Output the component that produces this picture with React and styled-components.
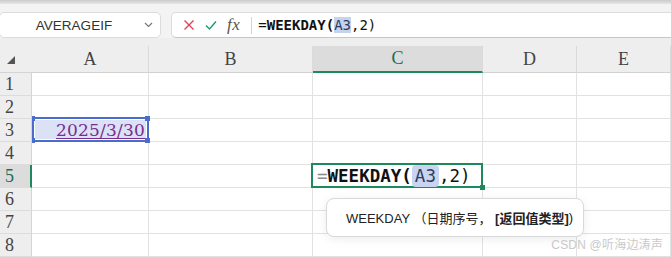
import React from "react";
import styled, { createGlobalStyle } from "styled-components";

const Global = createGlobalStyle`
  html, body {
    margin: 0;
    padding: 0;
    background: #fff;
  }
  body {
    overflow: hidden;
  }
`;

const Page = styled.div`
  position: relative;
  width: 671px;
  height: 257px;
  overflow: hidden;
  font-family: "Liberation Sans", "Noto Sans CJK SC", sans-serif;
`;

const Shade = styled.div`
  height: 4px;
  background: linear-gradient(#cbcbcb, #e6e6e6);
`;

const Toolbar = styled.div`
  display: flex;
  gap: 10px;
  height: 34px;
  padding-top: 8px;
  box-sizing: border-box;
  background: #f3f3f3;
`;

const NameBox = styled.div`
  display: flex;
  align-items: center;
  width: 162px;
  margin-left: -1px;
  box-sizing: border-box;
  background: #fff;
  border: 1px solid #dcdcdc;
  border-radius: 5px;
  color: #333;
  font-size: 13.5px;
`;

const NameText = styled.span`
  flex: 1;
  text-align: center;
  padding-left: 4px;
`;

const Chevron = styled.svg`
  width: 9px;
  height: 6px;
  margin-right: 7px;
`;

const FormulaBox = styled.div`
  flex: 1;
  display: flex;
  align-items: center;
  margin-right: -10px;
  box-sizing: border-box;
  background: #fff;
  border: 1px solid #dcdcdc;
  border-bottom-color: #c6c6c6;
  border-radius: 5px;
`;

const IconSlot = styled.svg`
  width: 12px;
  height: 12px;
  margin-left: ${(p) => p.$gap}px;
`;

const Fx = styled.span`
  margin-left: 10px;
  font-family: "Liberation Serif", serif;
  font-style: italic;
  font-size: 17px;
  color: #555;
  letter-spacing: 0.5px;
`;

const Divider = styled.div`
  width: 1px;
  height: 17px;
  margin-left: 11px;
  background: #d4d4d4;
`;

const BarFormula = styled.div`
  margin-left: 6px;
  font-family: "DejaVu Sans Mono", monospace;
  font-size: 14px;
  color: #111;
`;

const Strong = styled.b`
  font-weight: 700;
`;

const RefMark = styled.span`
  background: ${(p) => (p.$soft ? "#c9d4f0" : "#c6d3ef")};
  color: #2d3d60;
  border-radius: ${(p) => (p.$soft ? 4 : 0)}px;
  padding: ${(p) => (p.$soft ? "1px 3px" : "0")};
`;

const HeaderSpacer = styled.div`
  height: 8px;
  background: #eeeeee;
`;

const Sheet = styled.div`
  display: grid;
  grid-template-columns: 32px 117px 164px 170px 94px 94px;
  grid-auto-rows: 23px;
  grid-template-rows: 27px;
`;

const Corner = styled.div`
  position: relative;
  background: #eeeeee;
  border-bottom: 1px solid #d4d4d4;
`;

const CornerMark = styled.svg`
  position: absolute;
  left: 7px;
  top: 10px;
  width: 8px;
  height: 8px;
`;

const ColHead = styled.div`
  display: flex;
  align-items: center;
  justify-content: center;
  box-sizing: border-box;
  background: ${(p) => (p.$active ? "#dcdcdc" : "#eeeeee")};
  border-right: 1px solid #dadada;
  border-bottom: ${(p) => (p.$active ? "2px solid #1d8a5e" : "1px solid #d2d2d2")};
  color: ${(p) => (p.$active ? "#1b6d5a" : "#444")};
  font-family: "Liberation Serif", serif;
  font-size: 18px;
`;

const RowHead = styled.div`
  display: flex;
  align-items: center;
  padding-left: 5px;
  box-sizing: border-box;
  background: ${(p) => (p.$active ? "#dcdcdc" : "#eeeeee")};
  border-bottom: 1px solid #dcdcdc;
  border-right: ${(p) => (p.$active ? "2px solid #1d8a5e" : "1px solid #d4d4d4")};
  color: ${(p) => (p.$active ? "#1b6d5a" : "#444")};
  font-family: "Liberation Serif", serif;
  font-size: 18px;
`;

const Cell = styled.div`
  position: relative;
  display: flex;
  align-items: center;
  box-sizing: border-box;
  background: ${(p) => (p.$selected ? "#dbe2f5" : "#fff")};
  border-right: 1px solid #e2e2e2;
  border-bottom: 1px solid #e2e2e2;
  justify-content: ${(p) => (p.$right ? "flex-end" : "flex-start")};
  padding: 0 3px 0 4px;
  white-space: nowrap;
`;

const DateText = styled.span`
  font-family: "DejaVu Serif", serif;
  font-size: 17px;
  letter-spacing: 0.2px;
  color: #7a2b90;
  text-decoration: underline;
  text-underline-offset: 2px;
  text-decoration-thickness: 1px;
`;

const SelectFrame = styled.div`
  position: absolute;
  z-index: 2;
  top: -2px;
  left: 0;
  right: -1px;
  bottom: -1px;
  border: 2px solid #4a6ccc;
  box-shadow: inset 0 0 0 1px #fff;
  pointer-events: none;
`;

const Handle = styled.i`
  position: absolute;
  width: ${(p) => (p.$thin ? 3 : 5)}px;
  height: 5px;
  background: #4a6ccc;
  ${(p) => (p.$top ? "top: -3px;" : "bottom: -3px;")}
  ${(p) => (p.$thin ? "left: -2px;" : "right: -3px;")}
`;

const EditFrame = styled.div`
  position: absolute;
  z-index: 2;
  top: -2px;
  left: -2px;
  right: -1px;
  bottom: -1px;
  border: 2px solid #1d8a5e;
  pointer-events: none;
`;

const EditHandle = styled.i`
  position: absolute;
  right: -4px;
  bottom: -4px;
  width: 5px;
  height: 5px;
  background: #1d8a5e;
`;

const CellFormula = styled.div`
  position: relative;
  z-index: 3;
  font-family: "DejaVu Sans Mono", monospace;
  font-size: 17.5px;
  color: #111;
`;

const Eq = styled.span`
  color: #8a8a8a;
`;

const Tooltip = styled.div`
  position: absolute;
  left: 326px;
  top: 198px;
  width: 258px;
  height: 39px;
  box-sizing: border-box;
  display: flex;
  align-items: center;
  padding-left: 19px;
  background: #fff;
  border: 1px solid #d9d9d9;
  border-radius: 8px;
  box-shadow: 0 2px 10px rgba(0, 0, 0, 0.08);
  font-size: 13px;
  color: #222;
  white-space: pre;
`;

const Watermark = styled.div`
  position: absolute;
  right: 8px;
  top: 235px;
  font-size: 12px;
  color: #c9c9c9;
  letter-spacing: 0.2px;
`;

const columns = ["A", "B", "C", "D", "E"];
const rows = [1, 2, 3, 4, 5, 6, 7, 8];

const renderCell = (row, col) => {
  const key = `${col}${row}`;
  if (key === "A3") {
    return (
      <Cell key={key} $selected $right>
        <DateText>2025/3/30</DateText>
        <SelectFrame>
          <Handle $top $thin />
          <Handle $thin />
          <Handle $top />
          <Handle />
        </SelectFrame>
      </Cell>
    );
  }
  if (key === "C5") {
    return (
      <Cell key={key}>
        <CellFormula>
          <Eq>=</Eq>
          <Strong>WEEKDAY(</Strong>
          <RefMark $soft>A3</RefMark>,2)
        </CellFormula>
        <EditFrame>
          <EditHandle />
        </EditFrame>
      </Cell>
    );
  }
  return <Cell key={key} />;
};

export default function App() {
  return (
    <Page>
      <Global />
      <Shade />
      <Toolbar>
        <NameBox>
          <NameText>AVERAGEIF</NameText>
          <Chevron viewBox="0 0 9 6">
            <path d="M1 1l3.5 3.5L8 1" fill="none" stroke="#777" strokeWidth="1.2" />
          </Chevron>
        </NameBox>
        <FormulaBox>
          <IconSlot viewBox="0 0 12 12" $gap={11}>
            <path d="M1.5 1.5l9 9M10.5 1.5l-9 9" stroke="#e0405c" strokeWidth="1.4" />
          </IconSlot>
          <IconSlot viewBox="0 0 12 12" $gap={10}>
            <path d="M1 6.5l3.5 3.5L11 2.5" fill="none" stroke="#1d9a68" strokeWidth="1.4" />
          </IconSlot>
          <Fx>fx</Fx>
          <Divider />
          <BarFormula>
            =<Strong>WEEKDAY(</Strong>
            <RefMark>A3</RefMark>,2)
          </BarFormula>
        </FormulaBox>
      </Toolbar>
      <HeaderSpacer />
      <Sheet>
        <Corner>
          <CornerMark viewBox="0 0 8 8">
            <path d="M8 0V8H0Z" fill="#555" />
          </CornerMark>
        </Corner>
        {columns.map((c) => (
          <ColHead key={c} $active={c === "C"}>
            {c}
          </ColHead>
        ))}
        {rows.map((r) => (
          <React.Fragment key={r}>
            <RowHead $active={r === 5}>{r}</RowHead>
            {columns.map((c) => renderCell(r, c))}
          </React.Fragment>
        ))}
      </Sheet>
      <Tooltip>
        {"WEEKDAY （日期序号， "}
        <Strong>[返回值类型]</Strong>)
      </Tooltip>
      <Watermark>CSDN @听海边涛声</Watermark>
    </Page>
  );
}
